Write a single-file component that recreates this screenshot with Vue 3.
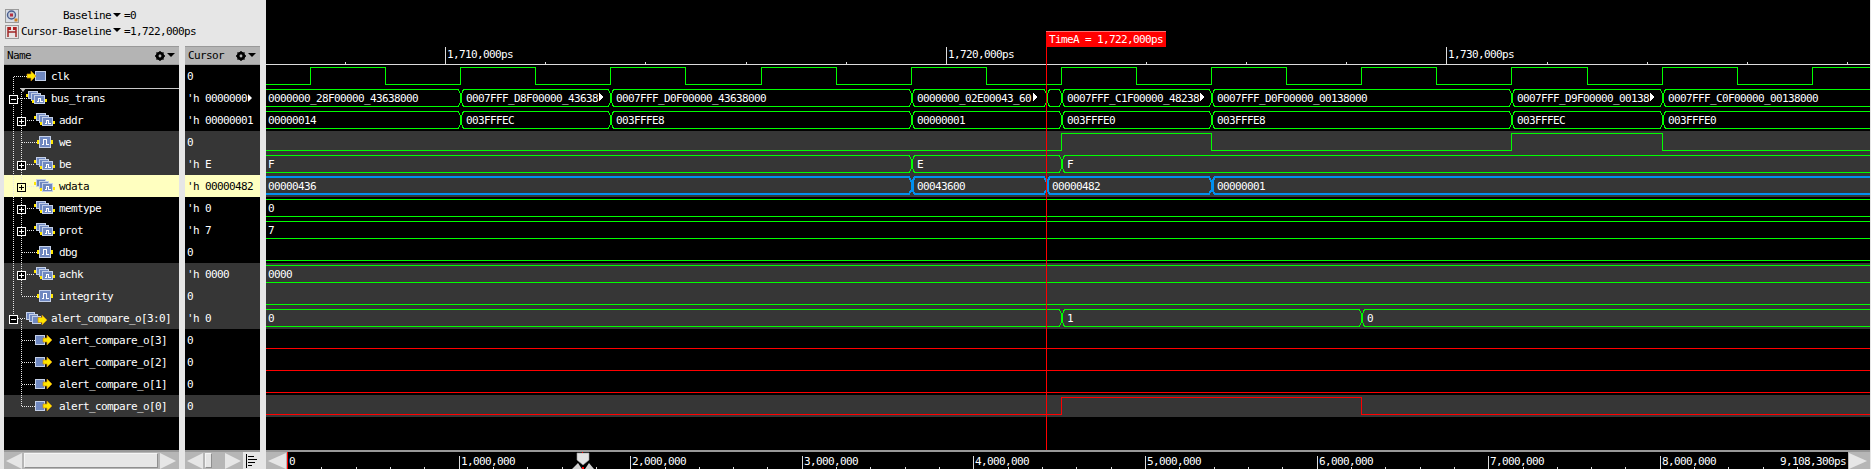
<script setup>
const signals = [
  { name: 'clk', value: '0', depth: 0, icon: 'input' },
  { name: 'bus_trans', value: "'h 0000000", more: true, depth: 0, icon: 'group', box: 'minus' },
  { name: 'addr', value: "'h 00000001", depth: 1, icon: 'group', box: 'plus' },
  { name: 'we', value: '0', depth: 1, icon: 'wire', dark: true },
  { name: 'be', value: "'h E", depth: 1, icon: 'group', box: 'plus', dark: true },
  { name: 'wdata', value: "'h 00000482", depth: 1, icon: 'group', box: 'plus', picked: true },
  { name: 'memtype', value: "'h 0", depth: 1, icon: 'group', box: 'plus' },
  { name: 'prot', value: "'h 7", depth: 1, icon: 'group', box: 'plus' },
  { name: 'dbg', value: '0', depth: 1, icon: 'wire' },
  { name: 'achk', value: "'h 0000", depth: 1, icon: 'group', box: 'plus', dark: true },
  { name: 'integrity', value: '0', depth: 1, icon: 'wire', dark: true },
  { name: 'alert_compare_o[3:0]', value: "'h 0", depth: 0, icon: 'groupout', box: 'minus', dark: true },
  { name: 'alert_compare_o[3]', value: '0', depth: 1, icon: 'out' },
  { name: 'alert_compare_o[2]', value: '0', depth: 1, icon: 'out' },
  { name: 'alert_compare_o[1]', value: '0', depth: 1, icon: 'out' },
  { name: 'alert_compare_o[0]', value: '0', depth: 1, icon: 'out', dark: true }
]

const rises = [310, 460, 610, 761, 911, 1061, 1211, 1361, 1511, 1662, 1812]
const falls = [385, 535, 685, 836, 986, 1136, 1286, 1436, 1587, 1737]

function stepPath(start, edges, high, low) {
  let y = start ? high : low
  let d = `M260 ${y}`
  for (const x of edges) {
    d += ` L${x + 0.5} ${y}`
    y = y === high ? low : high
    d += ` L${x + 0.5} ${y}`
  }
  return d + ` L1880 ${y}`
}

const clkEdges = [...rises, ...falls].sort((a, b) => a - b)

function busSegments(list) {
  return list.map((s, i) => {
    const a = s.x
    const b = i + 1 < list.length ? list[i + 1].x : 1890
    const t = s.thick ? 2 : 2.5
    const u = s.thick ? 19 : 19.5
    const al = a + 1.5
    const ar = b + 0.5
    const d = `M${a + 3.5} ${t} L${b - 2} ${t} L${ar} 7 L${ar} 15 L${b - 2} ${u} L${a + 3.5} ${u} L${al} 15 L${al} 7 Z`
    return { d, tx: a < 266 ? 268 : a + 6, label: s.t, more: s.more }
  })
}

const B = (arr, thick) => busSegments(arr.map(([x, t, more]) => ({ x, t, more, thick })))

const waves = [
  { kind: 'step', d: stepPath(false, clkEdges, 2.5, 19.5), color: '#00ff00' },
  { kind: 'bus', color: '#00ff00', segs: B([
    [200, '0000000_28F00000_43638000'], [460, '0007FFF_D8F00000_43638', 599],
    [610, '0007FFF_D0F00000_43638000'], [911, '0000000_02E00043_60', 1033], [1046, ''],
    [1061, '0007FFF_C1F00000_48238', 1200], [1211, '0007FFF_D0F00000_00138000'],
    [1511, '0007FFF_D9F00000_00138', 1650], [1662, '0007FFF_C0F00000_00138000']]) },
  { kind: 'bus', color: '#00ff00', segs: B([
    [200, '00000014'], [460, '003FFFEC'], [610, '003FFFE8'], [911, '00000001'],
    [1061, '003FFFE0'], [1211, '003FFFE8'], [1511, '003FFFEC'], [1662, '003FFFE0']]) },
  { kind: 'step', d: stepPath(false, [1061, 1211, 1511, 1662], 2.5, 19.5), color: '#00ff00' },
  { kind: 'bus', color: '#00ff00', segs: B([[200, 'F'], [911, 'E'], [1061, 'F']]) },
  { kind: 'bus', color: '#0090f0', width: 2, segs: B([[200, '00000436'], [911, '00043600'], [1046, '00000482'], [1211, '00000001']], true) },
  { kind: 'bus', color: '#00ff00', segs: B([[200, '0']]) },
  { kind: 'bus', color: '#00ff00', segs: B([[200, '7']]) },
  { kind: 'step', d: 'M260 19.5 L1880 19.5', color: '#00ff00' },
  { kind: 'bus', color: '#00ff00', segs: B([[200, '0000']]) },
  { kind: 'step', d: 'M260 19.5 L1880 19.5', color: '#00ff00' },
  { kind: 'bus', color: '#00ff00', segs: B([[200, '0'], [1061, '1'], [1361, '0']]) },
  { kind: 'step', d: 'M260 19.5 L1880 19.5', color: '#ff0000' },
  { kind: 'step', d: 'M260 19.5 L1880 19.5', color: '#ff0000' },
  { kind: 'step', d: 'M260 19.5 L1880 19.5', color: '#ff0000' },
  { kind: 'step', d: stepPath(false, [1061, 1361], 2.5, 19.5), color: '#ff0000' }
]

const rows = signals.map((s, i) => ({ ...s, wave: waves[i] }))

const rulerMajors = [
  { x: 445, t: '1,710,000ps' }, { x: 946, t: '1,720,000ps' }, { x: 1446, t: '1,730,000ps' }
]
const rulerMinors = [345, 545, 645, 746, 846, 1046, 1146, 1246, 1346, 1547, 1647, 1747, 1847]

const tlStart = 287
const tlStep = 171.6
const tlMajors = Array.from({ length: 8 }, (_, i) => ({
  x: Math.round(tlStart + tlStep * (i + 1)),
  t: `${i + 1},000,000`
}))
const tlMinors = []
for (let i = 1; i * 34.32 < 1560; i++) {
  if (i % 5) tlMinors.push(Math.round(tlStart + i * 34.32))
}

const treeLines = [
  'M13.5 77 V315', 'M13.5 76.5 H27', 'M18 98.5 H27', 'M21.5 92 V296', 'M25 120.5 H35',
  'M22 142.5 H37', 'M25 164.5 H35', 'M25 186.5 H35', 'M25 208.5 H35', 'M25 230.5 H35',
  'M22 252.5 H37', 'M25 274.5 H35', 'M22 296.5 H37', 'M18 318.5 H26', 'M21.5 319 V406',
  'M22 340.5 H35', 'M22 362.5 H35', 'M22 384.5 H35', 'M22 406.5 H35'
]
</script>

<template>
  <div class="app">
    <div class="left">
      <div class="topbar">
        <div class="readout">
          <svg class="tool" viewBox="0 0 14 14" width="14" height="14">
            <rect x="0.5" y="0.5" width="13" height="13" fill="#d8dce4" stroke="#9a9a9a" />
            <circle cx="6.5" cy="6" r="4" fill="#c8ccd8" stroke="#4a5f90" stroke-width="1.4" />
            <rect x="5" y="4.5" width="3" height="3" fill="#b83040" />
            <rect x="9.5" y="9.5" width="3" height="3" fill="#d08020" />
          </svg>
          <span class="rlabel">Baseline</span><i class="caret"></i><span>=0</span>
        </div>
        <div class="readout">
          <svg class="tool" viewBox="0 0 14 14" width="14" height="14">
            <rect x="0.5" y="0.5" width="13" height="13" fill="#e8e4e4" stroke="#9a9a9a" />
            <path d="M3 2 V12 M11 2 V12 M3 7 H11" stroke="#a02828" stroke-width="1.5" fill="none" />
            <path d="M3 2 H6 V5 H3 Z M8 2 H11 V5 H8 Z" fill="#b02020" />
          </svg>
          <span class="rlabel">Cursor-Baseline</span><i class="caret"></i><span>=1,722,000ps</span>
        </div>
      </div>
      <div class="columns">
        <section class="panel name-panel">
          <header class="phead">
            <span>Name</span>
            <span class="gear">
              <svg viewBox="0 0 10 10" width="10" height="10">
                <circle cx="5" cy="5" r="3.2" fill="none" stroke="#000" stroke-width="2.2" />
                <path d="M5 0 V10 M0 5 H10 M1.5 1.5 L8.5 8.5 M8.5 1.5 L1.5 8.5" stroke="#000" stroke-width="1.3" />
                <circle cx="5" cy="5" r="1.4" fill="#b4b4b4" />
              </svg><i class="caret"></i>
            </span>
          </header>
          <div class="list">
            <div v-for="r in rows" :key="r.name" class="row" :class="{ dark: r.dark, picked: r.picked }"
                 :style="{ paddingLeft: 21 + r.depth * 8 + 'px' }">
              <span v-if="r.box" class="expander" :style="{ left: (r.depth ? 13 : 5) + 'px' }">
                <svg viewBox="0 0 9 9" width="9" height="9">
                  <rect x="0.5" y="0.5" width="8" height="8" class="boxline" />
                  <path :d="r.box === 'plus' ? 'M2 4.5 H7 M4.5 2 V7' : 'M2 4.5 H7'" class="boxmark" />
                </svg>
              </span>
              <svg class="sigicon" viewBox="0 0 26 22" width="26" height="22" shape-rendering="crispEdges">
                <template v-if="r.icon === 'input'">
                  <rect x="10.5" y="6.5" width="10" height="9" fill="#6f88c0" stroke="#c4d0e8" />
                  <path d="M2 9 H6 V6 L11 11 L6 16 V13 H2 Z" fill="#ffe600" stroke="#c88a10" shape-rendering="auto" stroke-width="0.7" />
                </template>
                <template v-else-if="r.icon === 'group'">
                  <rect x="3.5" y="4.5" width="9" height="7" fill="#6f88c0" stroke="#c4d0e8" />
                  <rect x="6.5" y="6.5" width="9" height="7" fill="#6f88c0" stroke="#c4d0e8" />
                  <rect x="9.5" y="8.5" width="10" height="8" fill="#6f88c0" stroke="#c4d0e8" />
                  <path d="M11.5 14.5 H13.5 V11.5 H15.5 V14.5 H17.5" fill="none" stroke="#fff" />
                  <rect x="1" y="7" width="2" height="3" fill="#ffe600" />
                  <rect x="7" y="13" width="2" height="3" fill="#ffe600" />
                  <rect x="20" y="12" width="2" height="3" fill="#ffe600" />
                </template>
                <template v-else-if="r.icon === 'wire'">
                  <rect x="6.5" y="5.5" width="11" height="11" fill="#6f88c0" stroke="#c4d0e8" />
                  <path d="M8.5 13.5 H10.5 V8.5 H13.5 V13.5 H15.5" fill="none" stroke="#fff" />
                  <rect x="4" y="9" width="2" height="4" fill="#ffe600" />
                  <rect x="18" y="9" width="2" height="4" fill="#ffe600" />
                </template>
                <template v-else-if="r.icon === 'out'">
                  <rect x="2.5" y="6.5" width="9" height="9" fill="#6f88c0" stroke="#c4d0e8" />
                  <path d="M10 9 H14 V6 L19 11 L14 16 V13 H10 Z" fill="#ffe600" stroke="#c88a10" shape-rendering="auto" stroke-width="0.7" />
                </template>
                <template v-else>
                  <rect x="1.5" y="5.5" width="8" height="7" fill="#6f88c0" stroke="#c4d0e8" />
                  <rect x="4.5" y="7.5" width="8" height="7" fill="#6f88c0" stroke="#c4d0e8" />
                  <rect x="7.5" y="9.5" width="8" height="7" fill="#6f88c0" stroke="#c4d0e8" />
                  <path d="M13 10.5 H17 V8 L22 13 L17 18 V15.5 H13 Z" fill="#ffe600" stroke="#c88a10" shape-rendering="auto" stroke-width="0.7" />
                </template>
              </svg>
              <span class="label">{{ r.name }}</span>
            </div>
            <div class="dragmark"><i class="dragtip"></i></div>
            <svg class="tree" width="175" height="385" viewBox="4 65 175 385" shape-rendering="crispEdges">
              <path v-for="d in treeLines" :key="d" :d="d" stroke="#e8e8e8" stroke-dasharray="1 1" fill="none" />
            </svg>
          </div>
          <div class="sbar">
            <i class="arrow-l"></i><b class="thumb wide"></b><i class="arrow-r"></i>
          </div>
        </section>
        <section class="panel value-panel">
          <header class="phead">
            <span>Cursor</span>
            <span class="gear">
              <svg viewBox="0 0 10 10" width="10" height="10">
                <circle cx="5" cy="5" r="3.2" fill="none" stroke="#000" stroke-width="2.2" />
                <path d="M5 0 V10 M0 5 H10 M1.5 1.5 L8.5 8.5 M8.5 1.5 L1.5 8.5" stroke="#000" stroke-width="1.3" />
                <circle cx="5" cy="5" r="1.4" fill="#b4b4b4" />
              </svg><i class="caret"></i>
            </span>
          </header>
          <div class="list">
            <div v-for="r in rows" :key="r.name" class="row vrow" :class="{ dark: r.dark, picked: r.picked }">
              <span class="label">{{ r.value }}</span><i v-if="r.more" class="more"></i>
            </div>
          </div>
          <div class="sbar">
            <i class="arrow-l"></i><b class="thumb small"></b><span class="spring"></span><i class="arrow-r"></i>
            <span class="alignbox">
              <svg viewBox="0 0 17 17" width="17" height="17" shape-rendering="crispEdges">
                <path d="M3.5 2 V16 M5 4.5 H11 M5 7.5 H14 M5 10.5 H12 M5 13.5 H9" stroke="#000" fill="none" />
              </svg>
            </span>
          </div>
        </section>
      </div>
    </div>

    <section class="wave">
      <svg class="ruler" width="1604" height="65" viewBox="266 0 1604 65" shape-rendering="crispEdges">
        <path d="M266 64.5 H1870" stroke="#dcdcdc" />
        <path v-for="x in rulerMinors" :key="x" :d="`M${x + 0.5} 62 V64`" stroke="#dcdcdc" />
        <g v-for="m in rulerMajors" :key="m.x">
          <path :d="`M${m.x + 0.5} 47 V64`" stroke="#dcdcdc" />
          <text :x="m.x + 2" y="58" class="wtext">{{ m.t }}</text>
        </g>
      </svg>
      <div class="wrows">
        <div v-for="r in rows" :key="r.name" class="wrow" :class="{ dark: r.dark || r.picked }">
          <svg width="1604" height="22" viewBox="266 0 1604 22" shape-rendering="crispEdges">
            <path v-if="r.wave.kind === 'step'" :d="r.wave.d" :stroke="r.wave.color" fill="none" />
            <template v-else>
              <g v-for="(s, i) in r.wave.segs" :key="i">
                <path :d="s.d" :stroke="r.wave.color" :stroke-width="r.wave.width || 1" fill="none" />
                <text v-if="s.label" :x="s.tx" y="15" class="wtext">{{ s.label }}</text>
                <path v-if="s.more" :d="`M${s.more} 6 L${s.more + 4} 10 L${s.more} 14 Z`" fill="#fff" />
              </g>
            </template>
          </svg>
        </div>
      </div>
      <div class="cursor-line"></div>
      <div class="cursor-tag">TimeA = 1,722,000ps</div>
      <div class="timeline">
        <i class="arrow-l tl"></i>
        <svg class="tlsvg" width="1561" height="17" viewBox="287 452 1561 17" shape-rendering="crispEdges">
          <rect x="287" y="452" width="1" height="17" fill="#ff0000" />
          <text x="289" y="465" class="wtext">0</text>
          <path v-for="x in tlMinors" :key="x" :d="`M${x + 0.5} 467 V469`" stroke="#dcdcdc" />
          <g v-for="m in tlMajors" :key="m.x">
            <path :d="`M${m.x + 0.5} 456 V469`" stroke="#dcdcdc" />
            <text :x="m.x + 2" y="465" class="wtext">{{ m.t }}</text>
          </g>
          <text x="1846" y="465" text-anchor="end" class="wtext">9,108,300ps</text>
          <g shape-rendering="auto">
            <path d="M577 453 H589 V460 L583 465 L577 460 Z" fill="#e4e4e4" stroke="#9a9a9a" stroke-width="0.6" />
            <path d="M572 469 L578 463 L582 469 Z M585 469 L589 463 L594 469 Z" fill="#d0d0d0" />
            <rect x="582" y="452" width="1" height="1" fill="#ff0000" />
            <rect x="582" y="467" width="2" height="2" fill="#ff0000" />
          </g>
        </svg>
        <i class="arrow-r tr"></i>
      </div>
    </section>
    <div class="edge"></div>
  </div>
</template>

<style>
html, body { margin: 0; background: #000; overflow: hidden; }
</style>

<style scoped>
.app {
  width: 1871px;
  height: 469px;
  display: flex;
  background: #e6e6e6;
  overflow: hidden;
  font-family: "DejaVu Sans Mono", "Liberation Mono", monospace;
  font-size: 11px;
  letter-spacing: -0.62px;
  line-height: 22px;
}
.left { width: 266px; flex: none; display: flex; flex-direction: column; }
.topbar { height: 46px; flex: none; padding: 9px 0 0 5px; box-sizing: border-box; display: flex; flex-direction: column; gap: 1px; }
.readout { height: 14.5px; display: flex; align-items: center; color: #000; line-height: 14px; }
.tool { flex: none; }
.rlabel { width: 90.5px; margin-left: 1.5px; text-align: right; }
.caret {
  display: inline-block; width: 0; height: 0; margin: 0 3px 3px 2px;
  border-left: 4px solid transparent; border-right: 4px solid transparent; border-top: 4px solid #000;
}
.columns { flex: 1; display: flex; gap: 6px; padding-left: 4px; min-height: 0; }
.panel { display: flex; flex-direction: column; }
.name-panel { width: 175px; }
.value-panel { width: 75px; }
.phead {
  height: 19px; flex: none; box-sizing: border-box; background: #b4b4b4; border-top: 1px solid #999; border-bottom: 1px solid #999;
  display: flex; align-items: center; justify-content: space-between; padding: 0 4px 0 3px; color: #000; line-height: 17px;
}
.gear { display: flex; align-items: center; }
.gear .caret { margin: 0 0 2px 2px; }
.list { position: relative; flex: 1; background: #000; min-height: 0; }
.row { height: 22px; display: flex; align-items: center; position: relative; color: #fff; white-space: pre; box-sizing: border-box; }
.row.dark { background: #363636; }
.row.picked { background: #ffffc0; color: #000; }
.sigicon { flex: none; }
.label { display: block; margin-top: 2px; }
.vrow { padding-left: 2px; }
.more {
  width: 0; height: 0; margin-left: 1px; border-left: 4px solid #fff; border-top: 4px solid transparent; border-bottom: 4px solid transparent;
}
.expander { position: absolute; top: 8px; width: 9px; height: 9px; z-index: 2; }
.expander svg { display: block; }
.boxline { fill: #000; stroke: #fff; }
.boxmark { stroke: #fff; fill: none; }
.row.picked .boxline { fill: #ffffc0; stroke: #000; }
.row.picked .boxmark { stroke: #000; }
.tree { position: absolute; left: 0; top: 0; z-index: 1; pointer-events: none; }
.dragmark { position: absolute; left: 16px; right: 0; top: 23px; height: 1px; background: #c8c8c8; z-index: 2; }
.dragtip {
  position: absolute; left: 0; top: 0; width: 0; height: 0;
  border-left: 3px solid transparent; border-right: 3px solid transparent; border-top: 4px solid #c8c8c8;
}
.sbar {
  height: 19px; flex: none; box-sizing: border-box; background: #b6b6b6; border-top: 2px solid #999;
  display: flex; align-items: center; padding-left: 2px;
}
.arrow-l, .arrow-r {
  flex: none; width: 0; height: 0; border-top: 8px solid transparent; border-bottom: 8px solid transparent;
}
.arrow-l { border-right: 16px solid #e6e6e6; }
.arrow-r { border-left: 16px solid #e6e6e6; margin-left: 2px; }
.thumb { display: block; height: 15px; background: #e6e6e6; border: 1px solid #8f8f8f; border-top-color: #f4f4f4; border-left-color: #f4f4f4; box-sizing: border-box; flex: none; margin-left: 2px; }
.thumb.wide { width: 134px; }
.thumb.small { width: 7px; }
.spring { flex: 1; }
.alignbox { width: 17px; height: 17px; background: #e6e6e6; flex: none; margin-left: 2px; }
.alignbox svg { display: block; }

.wave { position: relative; width: 1604px; flex: none; background: #000; display: flex; flex-direction: column; }
.ruler { display: block; flex: none; }
.wrows { flex: 1; min-height: 0; }
.wrow { height: 22px; }
.wrow.dark { background: #363636; }
.wrow svg { display: block; }
.wtext {
  fill: #fff; font-family: "DejaVu Sans Mono", "Liberation Mono", monospace; font-size: 11px; letter-spacing: -0.62px;
}
.cursor-line { position: absolute; left: 780px; top: 31px; width: 1px; height: 419px; background: #ff0000; z-index: 3; }
.cursor-tag {
  position: absolute; left: 780px; top: 31px; width: 120px; height: 16px; box-sizing: border-box; z-index: 4;
  background: #ff0000; color: #fff; border-top: 1px solid #ff7070; padding-left: 3px; line-height: 15px; white-space: pre;
}
.timeline { height: 19px; flex: none; box-sizing: border-box; border-top: 2px solid #999; background: #b6b6b6; display: flex; align-items: center; position: relative; z-index: 5; }
.tlsvg { display: block; background: #000; flex: none; }
.arrow-l.tl { border-right-width: 18px; margin: 0 1px 0 2px; }
.arrow-r.tr { border-left-width: 18px; margin: 0 0 0 1px; }
.edge { width: 1px; flex: none; background: #e6e6e6; }
</style>
